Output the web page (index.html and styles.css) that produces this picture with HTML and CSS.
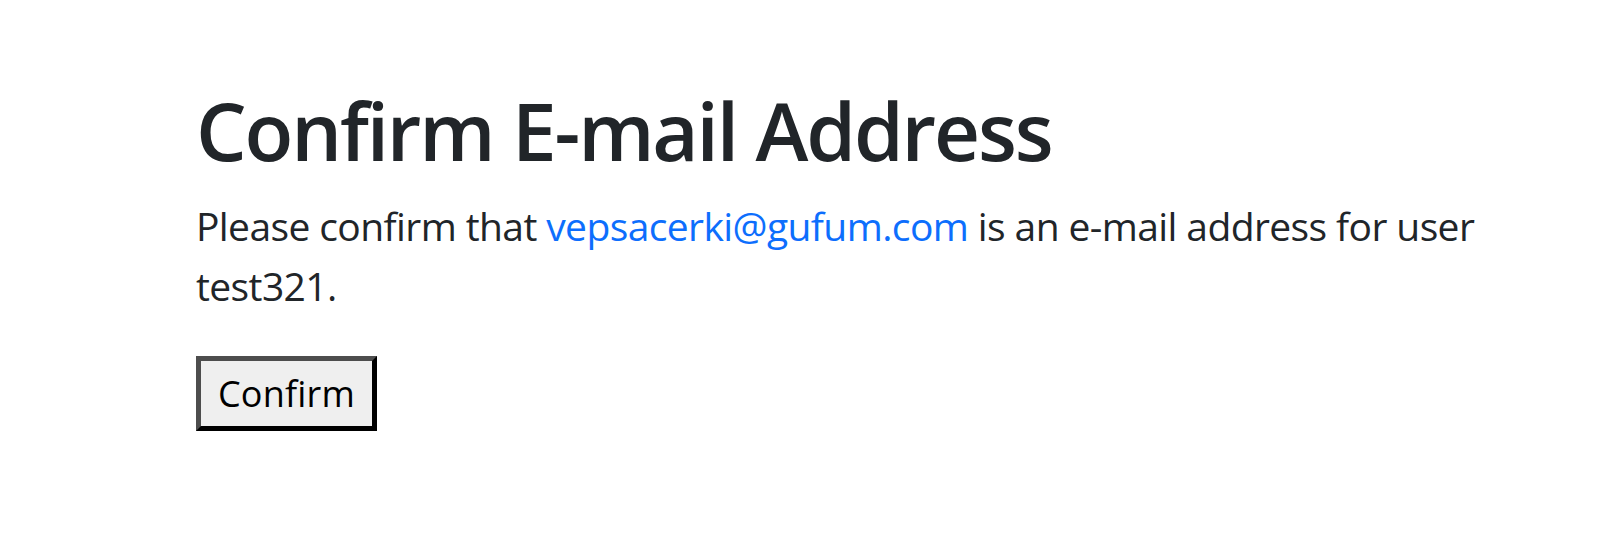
FILE: index.html
```html
<!DOCTYPE html>
<html lang="en">
<head>
<meta charset="utf-8">
<title>Confirm E-mail Address</title>
<link rel="stylesheet" href="styles.css">
</head>
<body>
<main class="container">
  <h1 class="title">Confirm E-mail Address</h1>
  <p class="lead-text">Please confirm that <a class="email" href="#">vepsacerki@gufum.com</a> is an e-mail address for user test321.</p>
  <form class="confirm-form">
    <button class="confirm-btn" type="button">Confirm</button>
  </form>
</main>
</body>
</html>
```

FILE: styles.css
```css
html, body {
  margin: 0;
  padding: 0;
  background: #ffffff;
}

body {
  font-family: "Open Sans", "Noto Sans", sans-serif;
  color: #212529;
}

.container {
  padding: 82px 0 0 196px;
  max-width: 1340px;
}

.title {
  margin: 0 0 18px 0;
  font-size: 80px;
  font-weight: 600;
  line-height: 1.2;
  letter-spacing: -2.15px;
  color: #212529;
}

.lead-text {
  margin: 0 0 40px 0;
  font-size: 39px;
  line-height: 60px;
  letter-spacing: -0.6px;
  color: #212529;
}

.email {
  color: #0d6efd;
  text-decoration: none;
}

.confirm-form {
  margin: 0;
}

.confirm-btn {
  box-sizing: border-box;
  width: 181px;
  height: 75px;
  padding: 0 10px;
  margin: 0;
  font-family: "Open Sans", "Noto Sans", sans-serif;
  font-size: 36px;
  line-height: 1;
  letter-spacing: 0.2px;
  color: #000000;
  background: #efefef;
  border-style: solid;
  border-width: 5px;
  border-color: #4d4d4d #000000 #000000 #4d4d4d;
  border-radius: 0;
}
```
